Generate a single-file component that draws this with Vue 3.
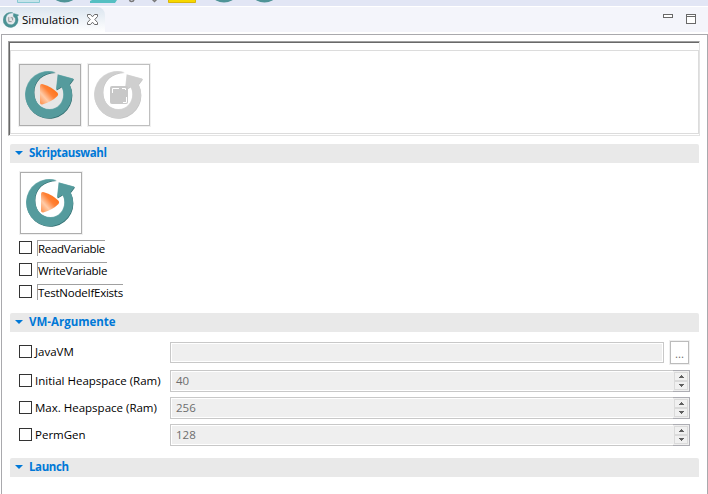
<script setup>
import { reactive } from 'vue'

const scripts = reactive([
  { name: 'ReadVariable', width: 68, spacing: -0.3, checked: false },
  { name: 'WriteVariable', width: 70, spacing: -0.25, checked: false },
  { name: 'TestNodeIfExists', width: 86, spacing: -0.25, checked: false },
])
const heaps = reactive([
  { name: 'Initial Heapspace (Ram)', value: 40, checked: false },
  { name: 'Max. Heapspace (Ram)', value: 256, checked: false },
  { name: 'PermGen', value: 128, checked: false },
])
const ring =
  'M36.5 8.5 A23.3 23.3 0 1 0 50.5 20.3 L54.700 15 L39 10.700 L37.300 26 L42.700 22.700 C48 33 42 45.500 31 45.500 C21 45.500 15 37.500 15 28 C15 17 23 9 36.500 8.500 Z'
const play = 'M21 22 Q21 19.500 24 20.200 Q33 23 38.500 28.800 Q39.800 30.300 38.500 32 Q33 37.500 24 40.200 Q21 41 21 38.500 Z'
</script>

<template>
  <svg class="defs" width="0" height="0">
    <defs>
      <linearGradient id="orange" x1="0" y1="1" x2="1" y2="0">
        <stop offset="0" stop-color="#ff8d45" />
        <stop offset=".3" stop-color="#ffcba8" />
        <stop offset=".55" stop-color="#ff8136" />
        <stop offset="1" stop-color="#ff6500" />
      </linearGradient>
    </defs>
  </svg>
  <div class="window">
    <svg class="toolbar" width="708" height="6" viewBox="0 0 708 6">
      <path d="M17.5 -1V2.5H39.5V-1" fill="#c5e3ea" stroke="#86c9d2" />
      <g fill="#4f9497">
        <ellipse cx="64.500" cy="-4" rx="11" ry="6.500" />
        <ellipse cx="224" cy="-4" rx="11" ry="6.500" />
        <ellipse cx="264.500" cy="-4" rx="11" ry="6.500" />
      </g>
      <path d="M90 3V1L92 0H117L115 3Z" fill="#55bfc2" />
      <path d="M129.500 -1Q129.500 1.500 131.500 1.500Q134 1.500 134 -1M152 -1L154.500 1.500L157 -1" fill="none" stroke="#777" stroke-width="1.500" />
      <path d="M168.500 -1V2.500H195.500V-1" fill="#f7d800" stroke="#d9b50a" />
    </svg>
    <header class="tabs">
      <div class="tab">
        <svg class="tab-icon" width="16" height="16" viewBox="6 6 50 50">
          <path :d="ring" fill="#4b9294" stroke="#4b9294" stroke-width="1.500" />
          <circle cx="30" cy="30" r="13" fill="#e3e5e8" />
          <path d="M24 22V36H33M30 24H36V32" fill="none" stroke="#909498" stroke-width="3" />
        </svg>
        <span class="tab-title">Simulation</span>
        <svg width="11" height="11" viewBox="0 0 11 11">
          <path d="M.5 .5H3.500L5.500 2.800L7.500 .5H10.500V2.500L7.800 5.500L10.500 8.500V10.500H7.500L5.500 8.200L3.500 10.500H.5V8.500L3.200 5.500L.5 2.500Z" fill="#fff" stroke="#6b6b6b" />
        </svg>
      </div>
      <div class="window-buttons">
        <i class="minimize"></i>
        <i class="maximize"></i>
      </div>
    </header>
    <main class="view">
      <div class="group">
        <div class="group-inner">
          <button class="tool active">
            <svg width="60" height="60" viewBox="1 1 60 60">
              <path :d="ring" fill="#326e71" transform="translate(.4 .6)" />
              <path :d="ring" fill="#79b3b4" transform="translate(-.4 -.5)" />
              <path :d="ring" fill="#559b9d" />
              <path :d="play" fill="url(#orange)" />
            </svg>
          </button>
          <button class="tool disabled">
            <svg width="60" height="60" viewBox="1 1 60 60">
              <path :d="ring" fill="#c5c5c5" transform="translate(.4 .6)" />
              <path :d="ring" fill="#dadada" transform="translate(-.4 -.5)" />
              <path :d="ring" fill="#cfcfcf" />
              <rect x="22" y="22" width="18" height="18" rx="2" fill="#c8c8c8" />
              <path d="M24.500 29V24.500H31M34 24.500H37.500V26M38.500 33V38.500H35" fill="none" stroke="#fff" />
            </svg>
          </button>
        </div>
      </div>

      <h2 class="section tight"><i class="twisty"></i>Skriptauswahl</h2>
      <div class="script-body">
        <button class="tool">
          <svg width="60" height="60" viewBox="1 1 60 60">
            <path :d="ring" fill="#326e71" transform="translate(.4 .6)" />
            <path :d="ring" fill="#79b3b4" transform="translate(-.4 -.5)" />
            <path :d="ring" fill="#559b9d" />
            <path :d="play" fill="url(#orange)" />
          </svg>
        </button>
        <label v-for="s in scripts" :key="s.name" class="script">
          <input v-model="s.checked" type="checkbox" class="check" />
          <span class="script-name" :style="{ width: s.width + 'px', letterSpacing: s.spacing + 'px' }">{{ s.name }}</span>
        </label>
      </div>

      <h2 class="section"><i class="twisty"></i>VM-Argumente</h2>
      <div class="vm-body">
        <div class="row java">
          <label class="row-label"><input type="checkbox" class="check" />JavaVM</label>
          <div class="field path"></div>
          <button class="browse">...</button>
        </div>
        <div v-for="h in heaps" :key="h.name" class="row">
          <label class="row-label"><input v-model="h.checked" type="checkbox" class="check" />{{ h.name }}</label>
          <div class="field number">
            <span class="value">{{ h.value }}</span>
            <div class="spin">
              <i><svg width="5" height="3" viewBox="0 0 5 3"><path d="M2 0h1v1h1v1h1v1H0V2h1V1h1z" /></svg></i>
              <i><svg width="5" height="3" viewBox="0 0 5 3"><path d="M0 0h5v1H4v1H3v1H2V2H1V1H0z" /></svg></i>
            </div>
          </div>
        </div>
      </div>

      <h2 class="section tight"><i class="twisty"></i>Launch</h2>
    </main>
  </div>
</template>

<style>
body {
  margin: 0;
  overflow: hidden;
  background: #fff;
}
</style>

<style scoped>
* {
  box-sizing: border-box;
}
.defs {
  position: absolute;
}
.window {
  display: flex;
  flex-direction: column;
  width: 708px;
  height: 494px;
  overflow: hidden;
  font: 11.5px/16px 'Open Sans', 'Noto Sans', sans-serif;
  color: #000;
}
.toolbar {
  display: block;
  flex: none;
  background: #e2e6f5;
}
.tabs {
  display: flex;
  flex: none;
  justify-content: space-between;
  height: 26px;
  border-top: 1px solid #fff;
  background: #f4f5fb;
}
.tab {
  display: flex;
  align-items: center;
  width: 105px;
  padding-left: 3px;
  border-radius: 0 8px 0 0;
  background: linear-gradient(#dbe5ef, #fff);
}
.tab-title {
  width: 65px;
  margin-left: 3px;
  white-space: nowrap;
}
.window-buttons {
  display: flex;
  gap: 13px;
  padding: 7px 12px 0 0;
}
.minimize {
  width: 10px;
  height: 4px;
  border: 1px solid #696969;
  background: #fff;
}
.maximize {
  width: 10px;
  height: 10px;
  border: 1px solid #696969;
  background: linear-gradient(#fff 1px, #696969 1px 2px, #fff 2px);
}
.view {
  flex: 1;
  margin: 2px 0 0 1px;
  padding: 6px 8px 0;
  border: solid #a9a9ad;
  border-width: 1px 1px 0;
}
.group {
  width: 692px;
  height: 95px;
  margin-left: -2px;
  padding-top: 8px;
  border: 1px solid #e3e3e3;
  border-top-color: #a0a0a0;
  border-left-color: #a0a0a0;
  box-shadow: inset 1px 1px #696969;
}
.group-inner {
  display: flex;
  gap: 7px;
  height: 84px;
  margin-left: 1px;
  padding: 13px 0 0 8px;
  border: 1px solid #dcdcdc;
}
.tool {
  display: block;
  width: 62px;
  height: 62px;
  padding: 0;
  border: 1px solid #adadad;
  outline: 1px solid #f0f0f0;
  background: #fff;
}
.tool svg {
  display: block;
}
.tool.active {
  background: #e6e6e6;
}
.tool.disabled {
  border-color: #bfbfbf;
}
.section {
  display: flex;
  align-items: center;
  width: 689px;
  height: 19px;
  margin: 8px 0 0;
  padding: 0 0 1px 5px;
  border-radius: 2px 2px 0 0;
  background: #e9e9e9;
  color: #0078d7;
  font-size: 11.5px;
  font-weight: 700;
}
.section.tight {
  letter-spacing: -0.38px;
}
.twisty {
  margin-right: 6px;
  border: solid transparent;
  border-width: 4px 4px 0;
  border-top-color: #0078d7;
}
.script-body {
  height: 142px;
  padding: 9px 0 0 10px;
}
.script {
  display: flex;
  height: 16px;
  margin: 6px 0 0 -1px;
}
.check {
  appearance: none;
  flex: none;
  width: 13px;
  height: 13px;
  margin: 1px 0 0;
  border: 1px solid #333;
  background: #fff;
}
.script-name {
  height: 16px;
  margin-left: 5px;
  border: solid #a0a0a0;
  border-width: 1px 0 0 1px;
  white-space: nowrap;
}
.vm-body {
  display: flex;
  flex-direction: column;
  gap: 5px;
  height: 118px;
  padding: 9px 0 0 9px;
}
.row {
  display: flex;
  align-items: center;
  height: 22px;
}
.row.java {
  height: 23px;
  margin-bottom: 1px;
}
.row.java .row-label {
  margin-top: -1px;
}
.row-label {
  display: flex;
  flex: none;
  gap: 3px;
  width: 151px;
  white-space: nowrap;
}
.field {
  display: flex;
  justify-content: space-between;
  border: 1px solid #c8c8c8;
  background: #efefef;
  box-shadow: inset 0 0 0 1px #fff;
}
.path {
  width: 494px;
  height: 21px;
}
.number {
  width: 520px;
  height: 22px;
}
.value {
  padding: 2px 0 0 5px;
  color: #6d6d6d;
}
.browse {
  width: 19px;
  height: 23px;
  margin-left: 6px;
  padding: 2px 0 0;
  border: 1px solid #bcbcbc;
  outline: 1px solid #efefef;
  background: #fff;
  color: #6d6d6d;
  font: inherit;
}
.spin {
  display: flex;
  flex-direction: column;
  width: 17px;
  margin: -1px;
  padding: 1px 1px 1px 0;
  border: solid #adadb3;
  border-width: 1px 1px 1px 0;
  background: #efefef;
}
.spin i {
  display: flex;
  flex: 1;
  align-items: center;
  justify-content: center;
  margin-left: 1px;
  border: 1px solid #dadada;
  background: #f0f0f0;
}
.spin svg {
  display: block;
  fill: #606060;
}
</style>
